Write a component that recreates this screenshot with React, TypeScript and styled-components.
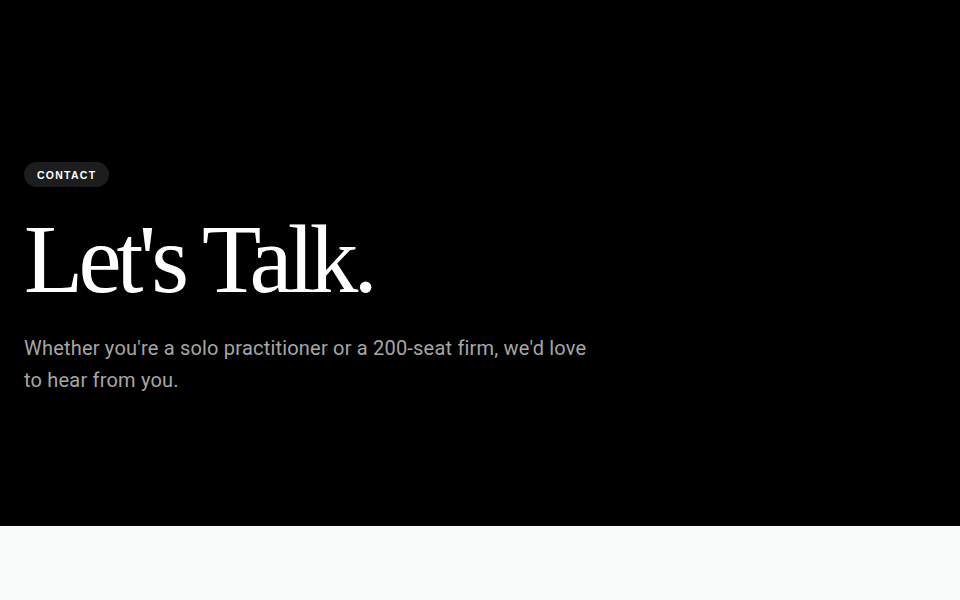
import React from "react";
import styled, { createGlobalStyle } from "styled-components";

const Global = createGlobalStyle`
  html, body { margin: 0; padding: 0; background: #f8fbfa; }
  * { box-sizing: border-box; }
`;

const Page = styled.div`
  width: 100%;
  min-height: 600px;
  background: #f8fbfa;
`;

const Hero = styled.section`
  height: 526px;
  background: #000;
  padding: 162px 24px 0;
  display: flex;
  flex-direction: column;
  align-items: flex-start;
`;

const Badge = styled.span`
  display: inline-flex;
  align-items: center;
  height: 25px;
  padding: 0 13px;
  border-radius: 999px;
  background: #1d1d1d;
  color: #fff;
  font-family: "Liberation Sans", Arial, sans-serif;
  font-weight: 700;
  font-size: 10.5px;
  letter-spacing: 0.12em;
`;

const Title = styled.h1`
  margin: 24px 0 0;
  font-family: "Liberation Serif", "Times New Roman", serif;
  font-weight: 400;
  font-size: 97px;
  line-height: 1;
  letter-spacing: -0.05em;
  color: #fff;
`;

const Lead = styled.p`
  margin: 24px 0 0;
  max-width: 575px;
  font-family: Roboto, "Liberation Sans", sans-serif;
  font-size: 20px;
  line-height: 32px;
  letter-spacing: 0.01em;
  color: #a6a6a6;
`;

export default function App() {
  return (
    <Page>
      <Global />
      <Hero>
        <Badge>CONTACT</Badge>
        <Title>Let's Talk.</Title>
        <Lead>
          Whether you're a solo practitioner or a 200-seat firm, we'd love to
          hear from you.
        </Lead>
      </Hero>
    </Page>
  );
}
